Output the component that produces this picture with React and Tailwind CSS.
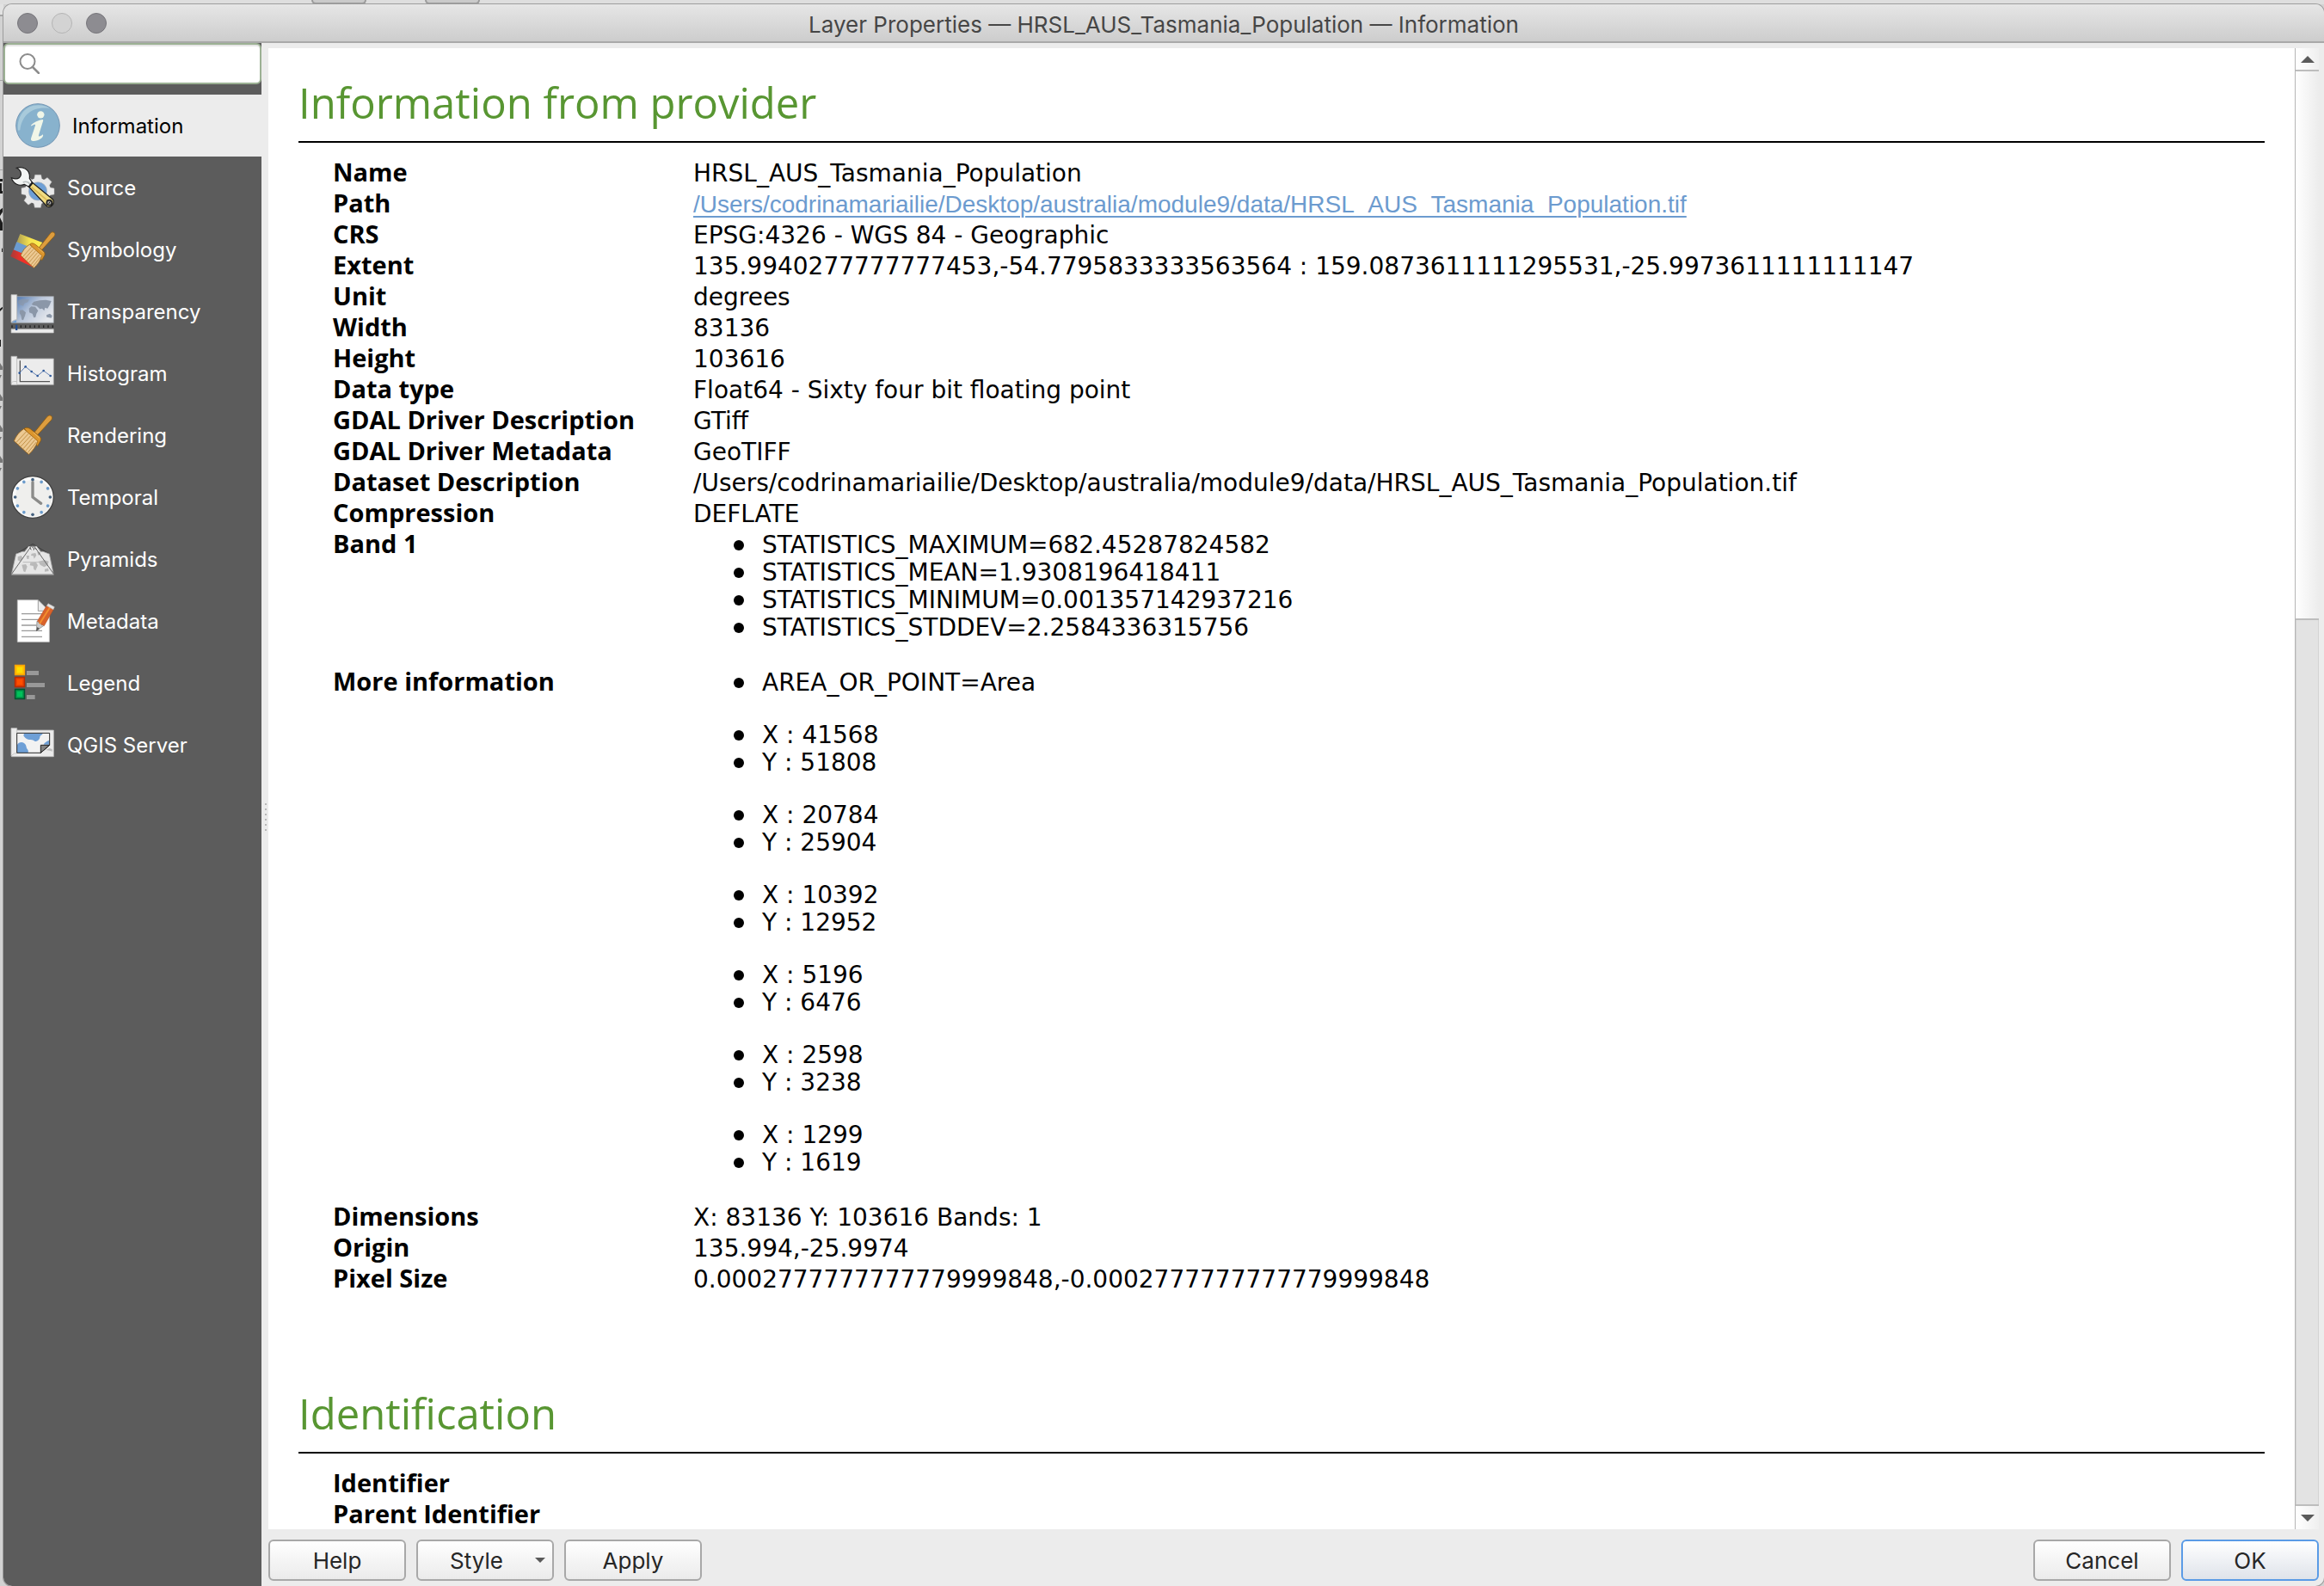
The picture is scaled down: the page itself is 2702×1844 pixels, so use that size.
const stats = [
  [
    'STATISTICS_MAXIMUM=682.45287824582',
    'STATISTICS_MEAN=1.9308196418411',
    'STATISTICS_MINIMUM=0.001357142937216',
    'STATISTICS_STDDEV=2.2584336315756',
  ],
];

const moreInformation = [
  ['AREA_OR_POINT=Area'],
  ['X : 41568', 'Y : 51808'],
  ['X : 20784', 'Y : 25904'],
  ['X : 10392', 'Y : 12952'],
  ['X : 5196', 'Y : 6476'],
  ['X : 2598', 'Y : 3238'],
  ['X : 1299', 'Y : 1619'],
];

const providerRows = [
  { label: 'Name', value: 'HRSL_AUS_Tasmania_Population' },
  {
    label: 'Path',
    link: '/Users/codrinamariailie/Desktop/australia/module9/data/HRSL_AUS_Tasmania_Population.tif',
  },
  { label: 'CRS', value: 'EPSG:4326 - WGS 84 - Geographic' },
  {
    label: 'Extent',
    value: '135.9940277777777453,-54.7795833333563564 : 159.0873611111295531,-25.9973611111111147',
  },
  { label: 'Unit', value: 'degrees' },
  { label: 'Width', value: '83136' },
  { label: 'Height', value: '103616' },
  { label: 'Data type', value: 'Float64 - Sixty four bit floating point' },
  { label: 'GDAL Driver Description', value: 'GTiff' },
  { label: 'GDAL Driver Metadata', value: 'GeoTIFF' },
  {
    label: 'Dataset Description',
    value: '/Users/codrinamariailie/Desktop/australia/module9/data/HRSL_AUS_Tasmania_Population.tif',
  },
  { label: 'Compression', value: 'DEFLATE' },
  { label: 'Band 1', groups: stats },
  { label: 'More information', groups: moreInformation },
  { label: 'Dimensions', value: 'X: 83136 Y: 103616 Bands: 1' },
  { label: 'Origin', value: '135.994,-25.9974' },
  { label: 'Pixel Size', value: '0.0002777777777779999848,-0.0002777777777779999848' },
];

const identificationRows = [
  { label: 'Identifier', value: '' },
  { label: 'Parent Identifier', value: '' },
];

function Icon({ box, children }) {
  return (
    <svg viewBox={box} className="size-[52px] shrink-0" aria-hidden="true">
      {children}
    </svg>
  );
}

function InformationIcon() {
  return (
    <Icon box="54 360 156 156">
      <circle cx="132" cy="438" r="76" fill="#88b2cd" stroke="#7496b4" strokeWidth="3" />
      <path d="M63 455c-5-50 25-88 70-88 18 0 30 4 41 11-62-8-98 24-104 76z" fill="#a8cadb" />
      <circle cx="142" cy="400" r="12.500" fill="#f0f6e8" />
      <path
        d="M108 437c9-10 27-19 41-20 2 0 2 3 1 6l-15 48c-1 4 0 6 4 4 4-1 8-4 11-6 2 5-2 11-8 15-9 7-20 9-28 8-7-1-7-6-5-12l14-42c1-4-1-5-5-3l-8 4c-2 1-3 0-2-2z"
        fill="#f0f6e8"
      />
    </Icon>
  );
}

function SourceIcon() {
  return (
    <Icon box="36 576 156 156">
      <g fill="#e9e9e9" stroke="#bdbdbd" strokeWidth="1.500">
        {[0, 45, 90, 135, 180, 225, 270, 315].map((angle) => (
          <path key={angle} d="M118 630l4-20h21l4 20z" transform={`rotate(${angle} 132 667)`} />
        ))}
      </g>
      <circle cx="132" cy="667" r="45" fill="#e9e9e9" />
      <circle cx="132" cy="667" r="32" fill="#6e9fd6" stroke="#b5b5b5" strokeWidth="2" />
      <path d="M101 652l12-15 71 58c5 6 3 16-3 22s-12 6-17 3z" fill="#f0dc82" stroke="#1f1f1f" strokeWidth="4" />
      <path d="M110 653l56 47" stroke="#dcb956" strokeWidth="5" />
      <path
        d="M58 586c12-4 30-2 39 10 6 8 7 17 6 27l10 14-12 15-16-9c-14 5-28 2-37-8-5-5-7-10-8-15 10 4 20 5 27 0 8-6 8-17 3-24-3-5-7-8-12-10z"
        fill="#f3f5f4"
        stroke="#1f1f1f"
        strokeWidth="3.500"
      />
      <path d="M80 636c6-3 12-3 18 0l8 8" stroke="#b9bfbf" strokeWidth="5" fill="none" />
      <path d="M100 653l14-17" stroke="#1f1f1f" strokeWidth="7" />
      <circle cx="172" cy="707" r="9" fill="#a9a9a9" stroke="#1f1f1f" strokeWidth="5" />
      <path d="M169 712l6-9" stroke="#1f1f1f" strokeWidth="3" />
    </Icon>
  );
}

function Brush() {
  return (
    <g strokeLinejoin="round">
      <path d="M116 733l48-59c5-6 11-6 15-3 4 4 4 9 0 14l-51 55z" fill="#dd9d3e" stroke="#8f5a0c" strokeWidth="2.500" />
      <path d="M85 715c6-6 15-3 22 2l30 24c7 6 8 14 2 21l-8 14z" fill="#dc952c" stroke="#8f5a0c" strokeWidth="2.500" />
      <path d="M83 716l49 43c-8 20-18 34-32 46L49 758c7-18 18-32 34-42z" fill="#ecc993" stroke="#9c6415" strokeWidth="2.500" />
      <g stroke="#b98539" strokeWidth="2.500">
        <path d="M57 763l34-37M65 770l34-37M73 777l34-37M81 785l33-38M89 793l32-38M96 800l31-38" />
      </g>
      <path d="M116 728l22 20" stroke="#f0bf6b" strokeWidth="3" />
    </g>
  );
}

function SymbologyIcon() {
  return (
    <Icon box="36 12 156 156">
      <defs>
        <linearGradient id="flagYellow">
          <stop offset="0" stopColor="#a99a55" />
          <stop offset="0.500" stopColor="#f5e24e" />
          <stop offset="1" stopColor="#fff04d" />
        </linearGradient>
        <linearGradient id="flagRed">
          <stop offset="0" stopColor="#a33c3a" />
          <stop offset="0.450" stopColor="#f03028" />
          <stop offset="1" stopColor="#f03028" />
        </linearGradient>
      </defs>
      <path d="M70 36l78 30-20 30-70-30z" fill="url(#flagYellow)" />
      <path d="M58 64l72 28-20 30-63-30z" fill="#6b9bd0" />
      <path d="M47 91l72 30-2 32-81-39z" fill="url(#flagRed)" />
      <g transform="translate(28 -586) scale(0.9 0.92)">
        <Brush />
      </g>
    </Icon>
  );
}

function RenderingIcon() {
  return (
    <Icon box="36 660 156 156">
      <Brush />
    </Icon>
  );
}

function TransparencyIcon() {
  return (
    <Icon box="36 228 156 156">
      <defs>
        <linearGradient id="seaFade" x1="0" y1="0" x2="1" y2="0.600">
          <stop offset="0" stopColor="#3e6cab" />
          <stop offset="0.550" stopColor="#b9c6da" />
          <stop offset="1" stopColor="#e4e7ec" />
        </linearGradient>
      </defs>
      <path d="M56 254h131v92H40z" fill="url(#seaFade)" stroke="#9fa3a8" strokeWidth="2.500" />
      <g fill="#8b97a8">
        <path d="M64 268l14-5 24 2-5 9-12 4-4 9-10-3-8-8z" opacity="0.700" />
        <path d="M69 302l10-1 11 9-3 12-6 15-5-2-3-15-5-8z" />
        <path d="M101 296l8-7 14 1 10 14-6 10-3 12-6 2-5-14-11-4z" />
        <path d="M110 281l8-9 20-4 22-2 19 4-6 14-7 12-9-3-3 11-7-8-8 2-11-11-12-2z" />
        <path d="M162 319l12-5 8 7-3 8-16-3z" />
      </g>
      <path d="M39 248h20v88c-7-2-12 2-20 9z" fill="#ececec" stroke="#b5b5b5" strokeWidth="2.500" />
      <path d="M41 344l16-7v9z" fill="#6e9fd6" />
      <path d="M42 355v8M73 355v8M89 355v8M105 355v8M121 355v8M136 355v8M152 355v8M168 355v8M184 355v8" stroke="#222" strokeWidth="4" />
      <path d="M39 368h148v13H39z" fill="#ececec" stroke="#b5b5b5" strokeWidth="2" />
      <path d="M54 353h7v19h-7z" fill="#234e93" />
    </Icon>
  );
}

function HistogramIcon() {
  return (
    <Icon box="36 444 156 156">
      <path d="M56 471h131v91H40z" fill="#ececec" stroke="#a9a9a9" strokeWidth="2.500" />
      <path d="M39 463h20v89c-7-3-12 0-20 8z" fill="#ececec" stroke="#b5b5b5" strokeWidth="2.500" />
      <path d="M40 562v-8c6-4 13-5 19-2v10z" fill="#ececec" stroke="#b5b5b5" strokeWidth="2" />
      <path d="M70 478v73h104" fill="none" stroke="#555" strokeWidth="4" />
      <path d="M68 521l21-22 21 17 21 15 21-18 24 18" fill="none" stroke="#4a6ea8" strokeWidth="2.500" />
      <g fill="#2f5a9b">
        <circle cx="68" cy="521" r="4" />
        <circle cx="89" cy="499" r="4" />
        <circle cx="110" cy="516" r="4" />
        <circle cx="131" cy="531" r="4" />
        <circle cx="152" cy="513" r="4" />
        <circle cx="176" cy="531" r="4" />
      </g>
    </Icon>
  );
}

function TemporalIcon() {
  return (
    <Icon box="36 36 156 156">
      <circle cx="114" cy="114" r="73" fill="#fbfbfa" stroke="#424242" strokeWidth="4" />
      <circle cx="117" cy="117" r="64" fill="#efefed" />
      {[30, 60, 120, 150, 210, 240, 300, 330].map((angle) => (
        <circle key={angle} cx="114" cy="53" r="5.500" fill="#6c9ccc" transform={`rotate(${angle} 114 114)`} />
      ))}
      {[0, 90, 180, 270].map((angle) => (
        <circle key={angle} cx="114" cy="53" r="5.500" fill="#44617f" transform={`rotate(${angle} 114 114)`} />
      ))}
      <path d="M114 62v52l29 22" fill="none" stroke="#8b8b89" strokeWidth="10" strokeLinecap="round" strokeLinejoin="round" />
    </Icon>
  );
}

function PyramidsIcon() {
  return (
    <Icon box="36 252 156 156">
      <path d="M58 311l56-34 56 34z" fill="#555" stroke="#333" strokeWidth="2" />
      <path d="M56 312l22-8 8 0 14-18h28l14 18 8 0 22 8 15 72H40z" fill="#e6e6e6" stroke="#a5a5a5" strokeWidth="2.500" />
      <g fill="#b9b9b9">
        <path d="M62 322l12-4 6 8-10 12-8-4zM76 350l14-2 5 8-7 20-6-3zM106 343l20-1 6 10-8 18-6-4-2-12-12-2zM134 338l22-4 14 4-4 14-12 6-14-8zM92 318l10 0-2 12-6-1zM110 311l14-2 3 8-8 12-3-10-8-1zM130 306l10-1 1 8-8 4zM156 365l12-3 2 10-14 2z" />
      </g>
      <path d="M80 341h70" stroke="#bcbcbc" strokeWidth="3" />
      <path d="M98 287h32l-5 14h-24z" fill="#ededed" />
      <path d="M104 290l5 8M114 286v6M120 290l-3 9M124 292l3 5" stroke="#444" strokeWidth="3" />
      <path d="M40 383l74-105 74 105" fill="none" stroke="#4e4e4e" strokeWidth="2.500" />
      <path d="M40 384h148" stroke="#9b9b9b" strokeWidth="3" />
    </Icon>
  );
}

function MetadataIcon() {
  return (
    <Icon box="36 468 156 156">
      <path d="M61 473h72l39 39v107H61z" fill="#fff" stroke="#c4c4c4" strokeWidth="2.500" />
      <path d="M133 473v38h39z" fill="#ededed" stroke="#8c8c8c" strokeWidth="2.500" />
      <path d="M75 521h72M75 541h62M75 561h52M75 580h72M75 601h72" stroke="#9a9a9a" strokeWidth="4" />
      <path d="M129 547l24 15-26 18z" fill="#c9c9c9" stroke="#777" strokeWidth="2" />
      <path d="M126 582l4-15 8 6z" fill="#555" />
      <path d="M163 492l24 13-33 58c-3-4-7-4-9-3-1-5-5-7-8-6 0-4-3-7-7-7z" fill="#d9622b" stroke="#b74f1f" strokeWidth="1.500" />
      <path d="M174 499l-36 57" stroke="#f28f2e" strokeWidth="6" />
      <path d="M168 485l22 12-4 9-23-13z" fill="#e4e4e4" stroke="#bbb" strokeWidth="1.500" />
    </Icon>
  );
}

function LegendIcon() {
  return (
    <Icon box="36 684 156 156">
      <path d="M53 701h32v32H53z" fill="#ffd900" stroke="#ffa200" strokeWidth="5" />
      <path d="M58 706h22v22H58z" fill="#ffdd00" stroke="#ffb800" strokeWidth="2" />
      <path d="M53 743h32v32H53z" fill="#ff4a00" stroke="#b82a00" strokeWidth="5" />
      <path d="M58 748h22v22H58z" fill="#ff4e00" stroke="#e03c00" strokeWidth="2" />
      <path d="M53 785h32v32H53z" fill="#00b853" stroke="#00532f" strokeWidth="5" />
      <path d="M58 790h22v22H58z" fill="#00c05a" stroke="#008a45" strokeWidth="2" />
      <path d="M93 720h42v15H93zM93 762h63v15H93zM93 804h29v15H93z" fill="#989898" />
    </Icon>
  );
}

function ServerIcon() {
  return (
    <Icon box="36 900 156 156">
      <path d="M56 927h131v92H40z" fill="#ececec" stroke="#bdbdbd" strokeWidth="2.500" />
      <path d="M160 996l12-6 10 3v8l-8-3z" fill="#bcbcbc" />
      <path d="M39 920h20v88c-7-2-12 1-20 9z" fill="#ececec" stroke="#c2c2c2" strokeWidth="2.500" />
      <path d="M59 937h114v40l-31 29H59z" fill="#f2f2f2" />
      <g fill="#6e9fd6">
        <path d="M84 938h65c-2 6-9 6-10 14-1 9-11 17-18 13-6-5-12-4-20-5-10-2-17-9-19-14z" />
        <path d="M60 1005V978c4-9 16-12 24-6 10 7 6 16 12 22 3 4 3 8 2 11z" />
        <path d="M172 962v15h-20c3-8 12-12 20-15z" />
      </g>
      <path d="M173 979h-31v27z" fill="#828282" stroke="#1f1f1f" strokeWidth="3" />
      <path d="M59 937h114v42l-31 27H59z" fill="none" stroke="#2a2a2a" strokeWidth="3" />
    </Icon>
  );
}

const pages = [
  { name: 'Information', icon: InformationIcon, current: true },
  { name: 'Source', icon: SourceIcon },
  { name: 'Symbology', icon: SymbologyIcon },
  { name: 'Transparency', icon: TransparencyIcon },
  { name: 'Histogram', icon: HistogramIcon },
  { name: 'Rendering', icon: RenderingIcon },
  { name: 'Temporal', icon: TemporalIcon },
  { name: 'Pyramids', icon: PyramidsIcon },
  { name: 'Metadata', icon: MetadataIcon },
  { name: 'Legend', icon: LegendIcon },
  { name: 'QGIS Server', icon: ServerIcon },
];

function TitleBar() {
  return (
    <header className="grid h-[45px] shrink-0 grid-cols-[1fr_auto_1fr] items-center border-b-2 border-[#a9a9a9] bg-linear-to-b from-[#e6e6e6] to-[#cdcdcd]">
      <div className="flex gap-4 pl-4">
        <button type="button" aria-label="Close" className="size-6 rounded-full border border-[#77767b] bg-[#8d8c91]" />
        <button type="button" aria-label="Minimize" className="size-6 rounded-full border border-[#b4b4b4] bg-[#d3d3d3]" />
        <button type="button" aria-label="Zoom" className="size-6 rounded-full border border-[#77767b] bg-[#8d8c91]" />
      </div>
      <h1 className="pt-1 text-[26px] leading-8 text-[#464646]">Layer Properties — HRSL_AUS_Tasmania_Population — Information</h1>
    </header>
  );
}

function Sidebar() {
  return (
    <aside className="flex w-[300px] shrink-0 flex-col bg-[#5c5c5c]">
      <label className="flex h-12 shrink-0 items-center gap-3 rounded-md border-2 border-[#9cb194] bg-white pl-4 inset-shadow-[0_2px_0_#e6e6e6]">
        <svg viewBox="0 0 24 24" className="size-6 shrink-0" fill="none" stroke="#8c8c8c" strokeWidth="2" aria-hidden="true">
          <circle cx="10" cy="9.500" r="8.500" />
          <path d="M16 16l7 7" strokeWidth="2.500" strokeLinecap="round" />
        </svg>
        <input type="text" aria-label="Search" className="w-full min-w-0 bg-transparent text-2xl outline-none" />
      </label>
      <nav aria-label="Pages" className="mt-3 flex flex-col">
        {pages.map(({ name, icon: PageIcon, current }) => (
          <button
            key={name}
            type="button"
            aria-current={current ? 'page' : undefined}
            className={
              current
                ? 'flex h-18 items-center gap-[14px] bg-[#ececec] pl-[14px] text-2xl text-black'
                : 'flex h-18 items-center gap-[14px] pl-2 text-2xl text-white'
            }
          >
            <PageIcon />
            <span className="pt-0.5">{name}</span>
          </button>
        ))}
      </nav>
    </aside>
  );
}

function Splitter() {
  return (
    <div className="flex w-2 shrink-0 flex-col justify-center gap-1 pt-1.5 pl-1">
      {[0, 1, 2, 3, 4, 5].map((dot) => (
        <div key={dot} className="size-0.5 bg-[#b8b8b8]" />
      ))}
    </div>
  );
}

function ValueCell({ row }) {
  if (row.link) {
    return (
      <td className="p-0 align-baseline font-['Liberation_Sans',Arial,sans-serif]">
        <a href="#path" className="text-[#6c9bcf] underline decoration-2 underline-offset-4">
          {row.link}
        </a>
      </td>
    );
  }
  if (row.groups) {
    return (
      <td className="pt-0.5 pb-[30px] pl-[47px] align-baseline leading-8">
        <div className="flex flex-col gap-[29px]">
          {row.groups.map((items) => (
            <ul key={items[0]}>
              {items.map((item) => (
                <li
                  key={item}
                  className="before:mr-[21px] before:inline-block before:size-3 before:rounded-full before:bg-black before:align-[3px] before:content-['']"
                >
                  {item}
                </li>
              ))}
            </ul>
          ))}
        </div>
      </td>
    );
  }
  return <td className="p-0 align-baseline">{row.value}</td>;
}

function Section({ title, rows }) {
  return (
    <section>
      <h2 className="border-b-2 border-black pb-[11px] font-['Open_Sans',sans-serif] text-[49px] leading-[68px] font-medium text-[#589632]">
        {title}
      </h2>
      <table className="mt-[18px] ml-10 text-left text-[28px] leading-9">
        <tbody>
          {rows.map((row) => (
            <tr key={row.label} className="h-9">
              <th scope="row" className="w-[419px] p-0 align-baseline font-['Open_Sans',sans-serif] text-[29px] leading-8 font-bold">
                {row.label}
              </th>
              <ValueCell row={row} />
            </tr>
          ))}
        </tbody>
      </table>
    </section>
  );
}

function ScrollBar() {
  return (
    <div className="flex w-7 shrink-0 flex-col border-l border-[#b5b5b5]">
      <button
        type="button"
        aria-label="Scroll up"
        className="flex h-[27px] shrink-0 items-center justify-center border-b-2 border-[#bdbdbd] bg-linear-to-r from-white to-[#efefef]"
      >
        <svg viewBox="0 0 16 8" className="h-2 w-4" aria-hidden="true">
          <path d="M0 8l8-8 8 8z" fill="#5a5a5a" />
        </svg>
      </button>
      <div className="flex grow flex-col">
        <div className="grow-13 border-b-2 border-[#bdbdbd] bg-linear-to-r from-white to-[#ececec]" />
        <div className="grow-21 border-x border-[#d3d3d3] bg-[#e3e3e3]" />
      </div>
      <button
        type="button"
        aria-label="Scroll down"
        className="flex h-[29px] shrink-0 items-center justify-center border-t-2 border-[#bdbdbd] bg-linear-to-r from-white to-[#efefef]"
      >
        <svg viewBox="0 0 16 8" className="h-2 w-4" aria-hidden="true">
          <path d="M0 0h16L8 8z" fill="#5a5a5a" />
        </svg>
      </button>
    </div>
  );
}

const buttonStyle =
  'flex h-12 w-40 items-center justify-center rounded-md border-2 border-[#a8a8a8] bg-linear-to-b from-white to-[#ebebeb] text-[26px] text-[#262626]';

function Footer() {
  return (
    <footer className="flex shrink-0 gap-3 pt-3 pb-1.5">
      <button type="button" className={buttonStyle}>
        Help
      </button>
      <button type="button" aria-haspopup="menu" className={buttonStyle}>
        <span className="grow text-center">Style</span>
        <svg viewBox="0 0 12 6" className="mr-2 h-1.5 w-3" aria-hidden="true">
          <path d="M0 0h12L6 6z" fill="#5a5a5a" />
        </svg>
      </button>
      <button type="button" className={buttonStyle}>
        Apply
      </button>
      <div className="grow" />
      <button type="button" className={buttonStyle}>
        Cancel
      </button>
      <button
        type="button"
        className="flex h-12 w-40 items-center justify-center rounded-md border-2 border-[#5a9be6] bg-linear-to-b from-white to-[#dfe3ea] text-[26px] text-[#262626]"
      >
        OK
      </button>
    </footer>
  );
}

function BackgroundEdge() {
  return (
    <svg viewBox="0 0 4 560" className="h-[560px] w-1 shrink-0" aria-hidden="true">
      <path d="M0 0h4v12H0z" fill="#e2e2e2" />
      <path d="M0 12h4v2H0zM0 88h4v1H0zM0 192h4v1H0z" fill="#a5a5a5" />
      <path d="M0 203h4v3H0zM0 208h2v12H0zM2 217h2v3H2zM0 239l4-3v4l-4 6zM0 248l4 8v4H0zM0 260h4v3H0zM2 284l2-1v5H2zM0 354l4-3v2l-4 4zM0 390h1v8H0zM3 392h1v5H3z" fill="#1c1c1c" />
      <path d="M0 417l4 6v2H0zM0 431h2l-2 4zM0 453l4 6v2H0zM0 467h2l-2 4zM0 489l4 6v2H0zM0 503h2l-2 4zM0 525l4 6v2H0zM0 539h2l-2 4z" fill="#777" />
    </svg>
  );
}

export default function App() {
  return (
    <div className="flex h-screen flex-col overflow-hidden bg-[#d2d2d2] font-['Inter',sans-serif]">
      <div className="flex h-[5px] shrink-0 gap-[68px] bg-[#dedede] pl-[362px]">
        <div className="w-16 rounded-b-md border-2 border-t-0 border-[#9b9b9b] bg-[#cacaca]" />
        <div className="w-16 rounded-b-md border-2 border-t-0 border-[#9b9b9b] bg-[#cacaca]" />
      </div>
      <div className="flex min-h-0 grow">
        <BackgroundEdge />
        <div className="flex min-w-0 grow flex-col overflow-hidden rounded-[10px] bg-[#ececec] shadow-[0_0_0_1px_#9d9d9d]">
          <TitleBar />
          <div className="flex min-h-0 grow">
            <Sidebar />
            <Splitter />
            <main className="flex min-w-0 grow flex-col pt-1.5 pr-1.5">
              <div className="flex min-h-0 grow">
                <div className="flex min-w-0 grow flex-col gap-[103px] overflow-hidden bg-white px-[35px] pt-[29px] font-['DejaVu_Sans',sans-serif] text-black">
                  <Section title="Information from provider" rows={providerRows} />
                  <Section title="Identification" rows={identificationRows} />
                </div>
                <ScrollBar />
              </div>
              <Footer />
            </main>
          </div>
        </div>
      </div>
    </div>
  );
}
